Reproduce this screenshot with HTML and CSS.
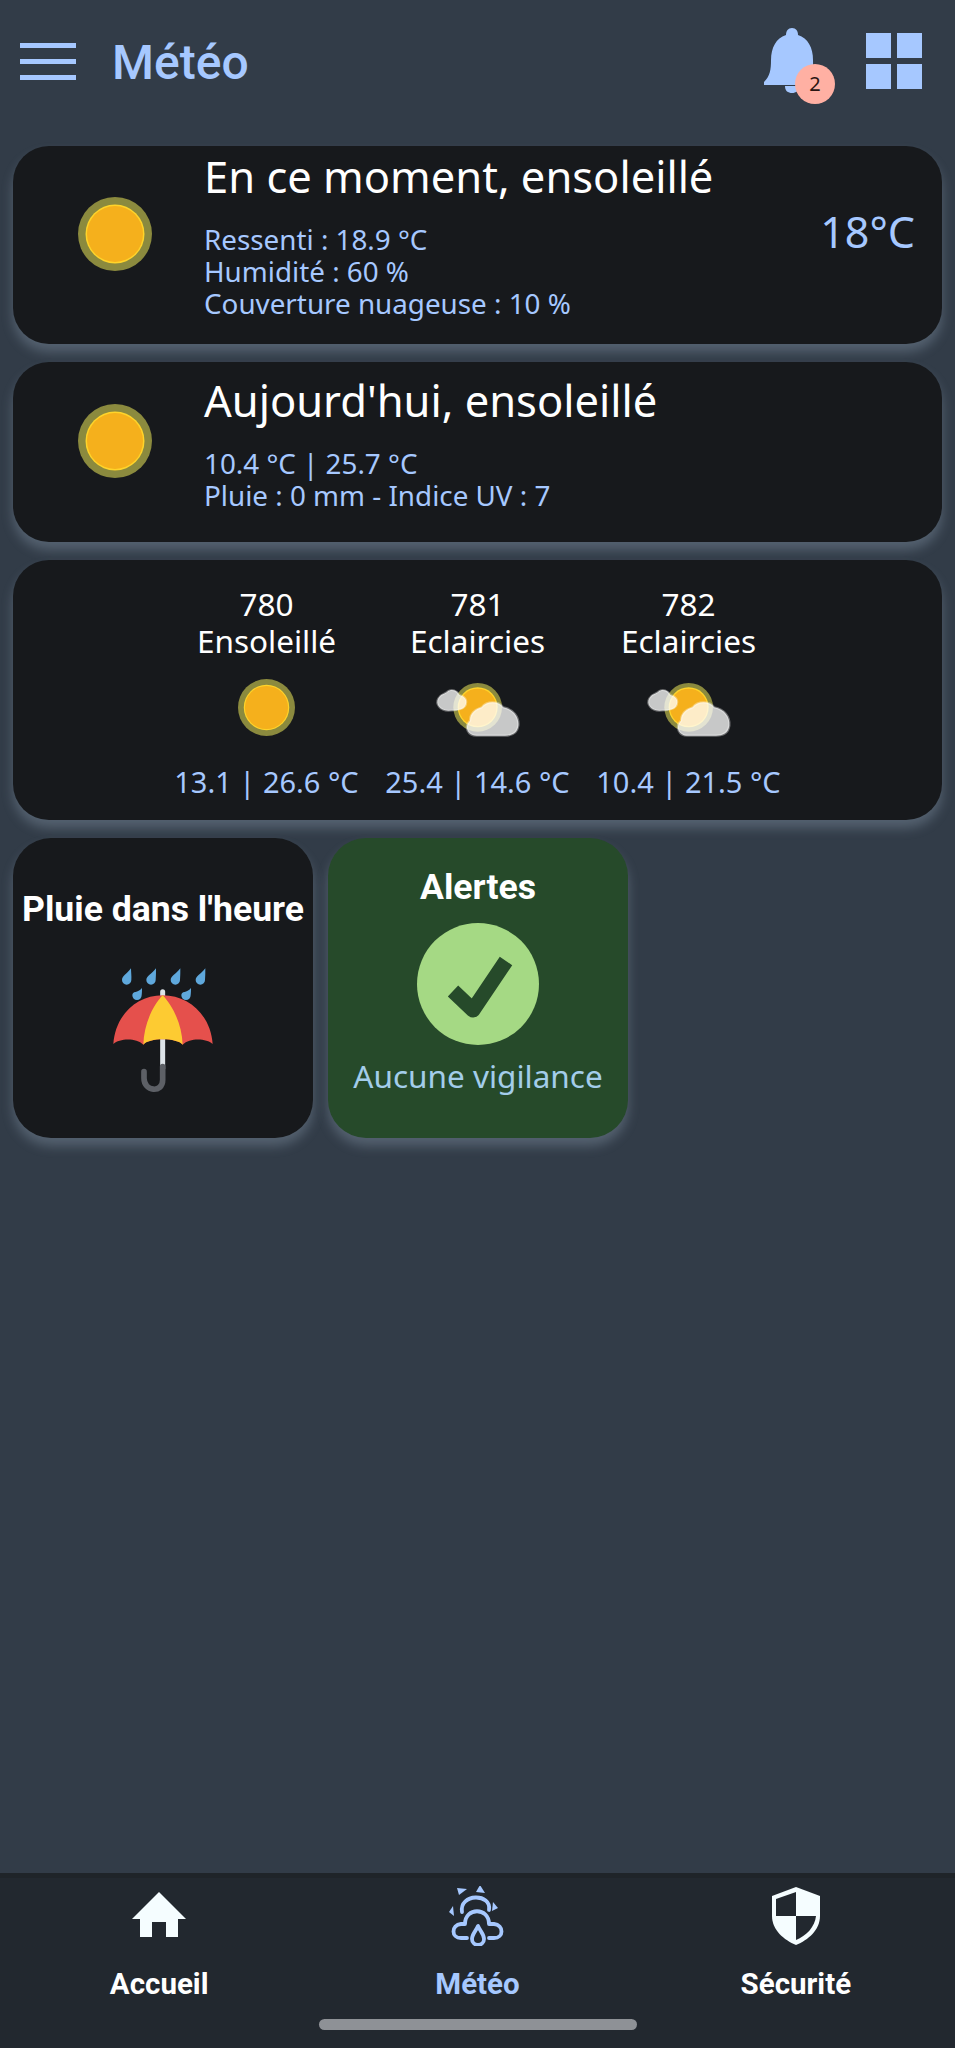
FILE: index.html
```html
<!DOCTYPE html>
<html lang="fr">
<head>
    <meta charset="UTF-8">
    <title>Météo</title>
    <link rel="stylesheet" href="styles.css">
</head>
<body>

<svg class="icon-defs" aria-hidden="true">
    <symbol id="sun" viewBox="0 0 74 74">
        <circle cx="37" cy="37" r="37" fill="#8b8a3e"/>
        <circle cx="37" cy="37" r="29.5" fill="#ffd42a"/>
        <circle cx="37" cy="37" r="28" fill="#f5b01c"/>
    </symbol>
    <symbol id="cloudy" viewBox="0 0 360 300">
        <circle cx="173" cy="145" r="73" fill="#8b8a3e"/>
        <circle cx="173" cy="145" r="60" fill="#ffd42a"/>
        <circle cx="173" cy="145" r="56" fill="#f5b01c"/>
        <path d="M85 155 C60 155 45 135 55 118 C62 104 75 105 82 98 C95 88 112 95 118 108 C135 112 145 125 135 142 C128 153 110 155 85 155 Z" fill="#fff" fill-opacity=".76" stroke="#fff" stroke-opacity=".35" stroke-width="6"/>
        <path d="M170 230 C145 230 130 205 150 185 C150 160 170 150 185 145 C200 125 235 125 250 145 C280 150 298 175 295 200 C292 222 275 230 255 230 Z" fill="#fff" fill-opacity=".76" stroke="#fff" stroke-opacity=".35" stroke-width="7"/>
    </symbol>
</svg>

<header class="top-bar">
    <div class="burger"><span></span><span></span><span></span></div>
    <h1 class="page-title">Météo</h1>
    <div class="bell">
        <svg viewBox="0 0 56 66" width="56" height="66">
            <path d="M28 0 C32 0 34 3 34 7 C44 10 49 20 49 32 C49 42 50 48 56 54 V57 H0 V54 C6 48 7 42 7 32 C7 20 12 10 22 7 C22 3 24 0 28 0 Z" fill="#a6c8ff"/>
            <path d="M21 58 H35 C35 63 32 65 28 65 C24 65 21 63 21 58 Z" fill="#a6c8ff"/>
        </svg>
        <span class="badge">2</span>
    </div>
    <div class="apps"><span></span><span></span><span></span><span></span></div>
</header>

<main class="content">
    <section class="card card-now">
        <svg class="sun-big"><use href="#sun"/></svg>
        <div class="card-text">
            <h2>En ce moment, ensoleillé</h2>
            <p>Ressenti : 18.9 °C</p>
            <p>Humidité : 60 %</p>
            <p>Couverture nuageuse : 10 %</p>
        </div>
        <div class="temp">18°C</div>
    </section>

    <section class="card card-today">
        <svg class="sun-big"><use href="#sun"/></svg>
        <div class="card-text">
            <h2>Aujourd'hui, ensoleillé</h2>
            <p>10.4 °C | 25.7 °C</p>
            <p>Pluie : 0 mm - Indice UV : 7</p>
        </div>
    </section>

    <section class="card card-days">
        <div class="day">
            <div class="day-name">780</div>
            <div class="day-name">Ensoleillé</div>
            <div class="day-icon"><svg class="sun-small"><use href="#sun"/></svg></div>
            <div class="day-temp">13.1 | 26.6 °C</div>
        </div>
        <div class="day">
            <div class="day-name">781</div>
            <div class="day-name">Eclaircies</div>
            <div class="day-icon"><svg class="cloud-small"><use href="#cloudy"/></svg></div>
            <div class="day-temp">25.4 | 14.6 °C</div>
        </div>
        <div class="day">
            <div class="day-name">782</div>
            <div class="day-name">Eclaircies</div>
            <div class="day-icon"><svg class="cloud-small"><use href="#cloudy"/></svg></div>
            <div class="day-temp">10.4 | 21.5 °C</div>
        </div>
    </section>

    <div class="tiles">
        <section class="tile tile-rain">
            <h3>Pluie dans l'heure</h3>
            <svg class="umbrella" viewBox="0 0 390 450">
                <g fill="#5fa8dc">
                    <path d="M93 55 C80 72 66 78 66 90 A14 14 0 0 0 94 90 C95 78 93 66 93 55 Z"/>
                    <path d="M168 55 C155 72 139 78 139 90 A14 14 0 0 0 167 90 C168 78 168 66 168 55 Z"/>
                    <path d="M241 55 C228 72 212 78 212 90 A14 14 0 0 0 240 90 C241 78 241 66 241 55 Z"/>
                    <path d="M316 55 C303 72 287 78 287 90 A14 14 0 0 0 315 90 C316 78 316 66 316 55 Z"/>
                    <path d="M126 114 C113 130 97 122 97 136 A14 14 0 0 0 125 136 C126 128 126 122 126 114 Z"/>
                    <path d="M273 114 C260 130 244 122 244 136 A14 14 0 0 0 272 136 C273 128 273 122 273 114 Z"/>
                </g>
                <path d="M188 125 V355" stroke="#dde3e8" stroke-width="15" stroke-linecap="round"/>
                <path d="M40 282 C46 195 110 136 188 136 C266 136 332 195 338 282 C320 265 270 262 248 284 C232 262 145 262 130 284 C108 262 58 265 40 282 Z" fill="#e5504c"/>
                <path d="M188 136 C160 165 132 220 130 284 C145 262 232 262 248 284 C246 220 216 165 188 136 Z" fill="#fdcb32"/>
                <path d="M188 350 V390 C188 430 132 425 132 385 V365" fill="none" stroke="#5d6066" stroke-width="17" stroke-linecap="round"/>
            </svg>
        </section>
        <section class="tile tile-alert">
            <h3>Alertes</h3>
            <div class="check-circle">
                <svg viewBox="0 0 122 122" width="122" height="122">
                    <path d="M36 68 L56 87 L89 38" fill="none" stroke="#264a2a" stroke-width="15" stroke-linejoin="round"/>
                </svg>
            </div>
            <p>Aucune vigilance</p>
        </section>
    </div>
</main>

<nav class="bottom-nav">
    <div class="tabs">
        <a class="tab">
            <svg class="tab-icon" viewBox="0 0 60 60">
                <path d="M30 6 L57 33 H49 V51 H37 V36 H23 V51 H11 V33 H3 Z" fill="#f5fdff"/>
            </svg>
            <span>Accueil</span>
        </a>
        <a class="tab tab-active">
            <svg class="tab-icon" viewBox="27 17 60 60">
                <g fill="#a6c8ff">
                    <path d="M37 19 L47 20 L39 26 Z"/>
                    <path d="M60 16 L65 24 L56 23 Z"/>
                    <path d="M73 33 L78 39 L72 42 Z"/>
                    <path d="M33 37 L29 43 L34 47 Z"/>
                </g>
                <g fill="none" stroke="#a6c8ff" stroke-width="3.8" stroke-linecap="round" stroke-linejoin="round">
                    <path d="M42 43 C39 24 72 24 69 41"/>
                    <path d="M47 69 H41 C31 69 31 56 41 55 H45 C45 38 69 38 69 55 H74 C84 56 84 69 74 69 H69"/>
                    <path d="M58 57 C56 62 52 65 52 70 A6 6 0 0 0 64 70 C64 65 60 62 58 57 Z"/>
                </g>
            </svg>
            <span>Météo</span>
        </a>
        <a class="tab">
            <svg class="tab-icon" viewBox="0 0 60 60">
                <path d="M30 1 L54 10 V30 C54 44 42 54 30 59 C18 54 6 44 6 30 V10 Z" fill="#f5fdff"/>
                <path d="M30 6 L10 13 V30 H30 Z" fill="#22282f"/>
                <path d="M30 30 H50 C49 41 40 50 30 54 Z" fill="#22282f"/>
            </svg>
            <span>Sécurité</span>
        </a>
    </div>
    <div class="home-handle"></div>
</nav>

</body>
</html>
```

FILE: styles.css
```css
* {
    box-sizing: border-box;
}
body {
    margin: 0;
    height: 2048px;
    display: flex;
    flex-direction: column;
    font-family: "Noto Sans", sans-serif;
    background: #323c48;
    color: #a6c8ff;
}
h1, h2, h3, p {
    margin: 0;
    font-weight: normal;
}
.icon-defs {
    display: none;
}

/* top bar */
.top-bar {
    display: flex;
    align-items: center;
    height: 122px;
    padding: 0 33px 0 20px;
    margin-bottom: 24px;
}
.burger {
    display: flex;
    flex-direction: column;
    gap: 11px;
    width: 56px;
}
.burger span {
    height: 5px;
    background: #a6c8ff;
}
.page-title {
    margin-left: 36px;
    padding-top: 2px;
    flex: 1;
    font-family: Roboto, sans-serif;
    font-weight: 500;
    font-size: 48px;
}
.bell {
    position: relative;
    width: 56px;
    height: 66px;
    margin-right: 46px;
}
.bell svg {
    display: block;
}
.badge {
    position: absolute;
    left: 31px;
    top: 36px;
    width: 40px;
    height: 40px;
    border-radius: 50%;
    background: #ffb0a3;
    color: #2a1512;
    font-size: 20px;
    line-height: 40px;
    text-align: center;
}
.apps {
    display: grid;
    grid-template-columns: 25px 25px;
    grid-template-rows: 25px 25px;
    gap: 6px;
}
.apps span {
    background: #a6c8ff;
}

/* cards */
.content {
    flex: 1;
    display: flex;
    flex-direction: column;
    gap: 18px;
    padding: 0 13px;
}
.card {
    display: flex;
    background: #17191c;
    border-radius: 36px;
    box-shadow: 0 8px 12px rgba(165, 185, 205, 0.3);
}
.card-now {
    height: 198px;
    padding: 3px 27px 0 65px;
}
.card-today {
    height: 180px;
    padding: 11px 27px 0 65px;
}
.sun-big {
    width: 74px;
    height: 74px;
    margin: 48px 52px 0 0;
    flex: none;
}
.card-today .sun-big {
    margin-top: 31px;
}
.card-text {
    flex: 1;
    font-size: 27.8px;
    line-height: 32px;
}
.card-text h2 {
    font-size: 43.5px;
    line-height: 54px;
    margin-bottom: 20px;
    color: #fff;
}
.temp {
    margin-top: 54px;
    font-size: 43px;
    line-height: 58px;
}
.card-days {
    height: 260px;
    justify-content: center;
    padding-top: 25px;
}
.day {
    width: 211px;
    text-align: center;
}
.day-name {
    font-size: 31.5px;
    line-height: 37px;
    color: #fff;
}
.day-icon {
    height: 90px;
    margin-top: 3px;
    display: flex;
    align-items: center;
    justify-content: center;
}
.sun-small {
    width: 57px;
    height: 57px;
}
.cloud-small {
    width: 120px;
    height: 100px;
    margin: 3px 0 0 4px;
}
.day-temp {
    margin-top: 11px;
    font-size: 29px;
    line-height: 38px;
}

/* square tiles */
.tiles {
    display: flex;
    gap: 15px;
}
.tile {
    width: 300px;
    height: 300px;
    border-radius: 38px;
    text-align: center;
    box-shadow: 0 8px 12px rgba(165, 185, 205, 0.3);
}
.tile h3 {
    font-family: Roboto, sans-serif;
    font-weight: 700;
    font-size: 35.6px;
    color: #fff;
}
.tile-rain {
    background: #17191c;
    padding-top: 51px;
}
.tile-rain h3 {
    line-height: 40px;
}
.umbrella {
    display: block;
    width: 130px;
    height: 150px;
    margin: 21px 0 0 87px;
}
.tile-alert {
    background: #264a2a;
    padding-top: 29px;
}
.tile-alert h3 {
    line-height: 40px;
}
.check-circle {
    width: 122px;
    height: 122px;
    margin: 16px auto 0;
    border-radius: 50%;
    background: #a5d984;
}
.check-circle svg {
    display: block;
}
.tile-alert p {
    margin-top: 10px;
    font-size: 31.5px;
    line-height: 42px;
    color: #a3cdea;
}

/* bottom nav */
.bottom-nav {
    height: 175px;
    background: #22282f;
    border-top: 5px solid #1f2429;
}
.tabs {
    display: flex;
}
.tab {
    flex: 1;
    display: flex;
    flex-direction: column;
    align-items: center;
    color: #fff;
    font-family: Roboto, sans-serif;
    font-weight: 700;
    font-size: 29.5px;
}
.tab-active {
    color: #a6c8ff;
}
.tab-icon {
    width: 60px;
    height: 60px;
    margin-top: 8px;
}
.tab span {
    margin-top: 21px;
    line-height: 34px;
}
.home-handle {
    width: 318px;
    height: 11px;
    margin: 18px auto 0;
    border-radius: 6px;
    background: #8e9196;
}
```
